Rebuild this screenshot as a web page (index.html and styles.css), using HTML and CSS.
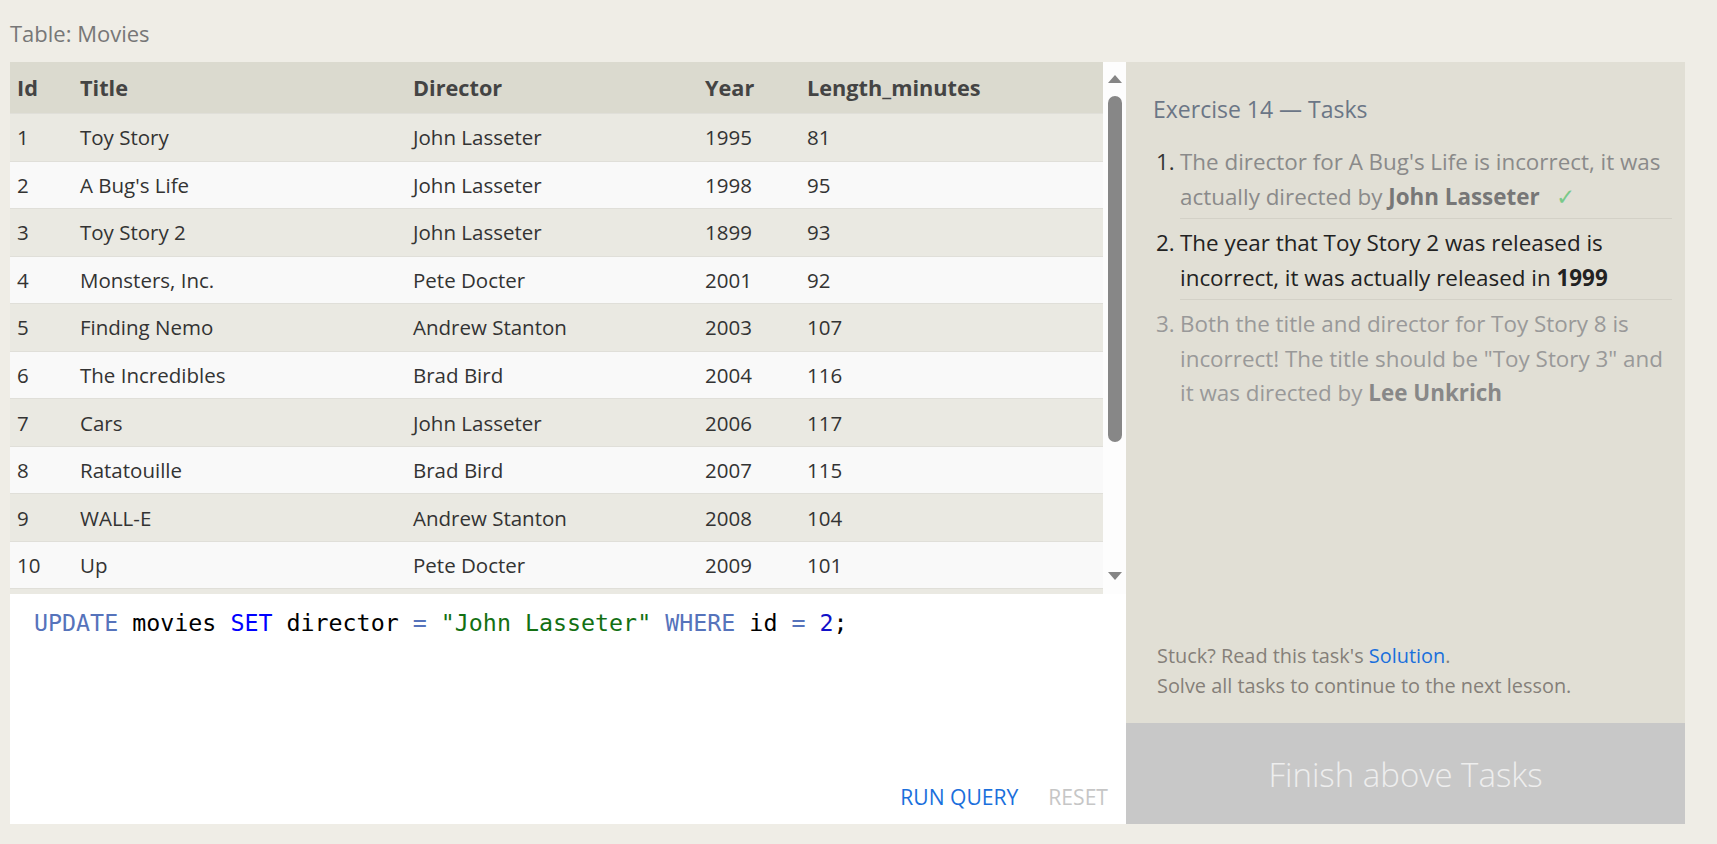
FILE: index.html
```html
<!DOCTYPE html>
<html lang="en">
<head>
<meta charset="utf-8">
<title>SQL Lesson</title>
<link rel="stylesheet" href="styles.css">
</head>
<body>
<div class="page">
  <div class="caption">Table: Movies</div>
  <div class="main">
    <div class="left">
      <div class="table-wrap">
        <div class="table">
          <div class="row head"><div>Id</div><div>Title</div><div>Director</div><div>Year</div><div>Length_minutes</div></div>
          <div class="row odd"><div>1</div><div>Toy Story</div><div>John Lasseter</div><div>1995</div><div>81</div></div>
          <div class="row even"><div>2</div><div>A Bug's Life</div><div>John Lasseter</div><div>1998</div><div>95</div></div>
          <div class="row odd"><div>3</div><div>Toy Story 2</div><div>John Lasseter</div><div>1899</div><div>93</div></div>
          <div class="row even"><div>4</div><div>Monsters, Inc.</div><div>Pete Docter</div><div>2001</div><div>92</div></div>
          <div class="row odd"><div>5</div><div>Finding Nemo</div><div>Andrew Stanton</div><div>2003</div><div>107</div></div>
          <div class="row even"><div>6</div><div>The Incredibles</div><div>Brad Bird</div><div>2004</div><div>116</div></div>
          <div class="row odd"><div>7</div><div>Cars</div><div>John Lasseter</div><div>2006</div><div>117</div></div>
          <div class="row even"><div>8</div><div>Ratatouille</div><div>Brad Bird</div><div>2007</div><div>115</div></div>
          <div class="row odd"><div>9</div><div>WALL-E</div><div>Andrew Stanton</div><div>2008</div><div>104</div></div>
          <div class="row even"><div>10</div><div>Up</div><div>Pete Docter</div><div>2009</div><div>101</div></div>
          <div class="row odd partial"></div>
        </div>
        <div class="scrollbar">
          <span class="arrow up"></span>
          <div class="track"><span class="thumb"></span></div>
          <span class="arrow down"></span>
        </div>
      </div>
      <div class="editor">
        <div class="code"><span class="kw">UPDATE</span> movies <span class="kw2">SET</span> director <span class="op">=</span> <span class="str">"John Lasseter"</span> <span class="kw">WHERE</span> id <span class="op">=</span> <span class="num">2</span>;</div>
        <div class="actions"><span class="run">RUN QUERY</span><span class="reset">RESET</span></div>
      </div>
    </div>
    <div class="panel">
      <div class="panel-body">
        <h2 class="ex-title">Exercise 14 — Tasks</h2>
        <ol class="tasks">
          <li class="task done"><span class="n">1.</span><span class="t">The director for A Bug's Life is incorrect, it was actually directed by <b>John Lasseter</b><span class="check">✓</span></span></li>
          <li class="task current"><span class="n">2.</span><span class="t">The year that Toy Story 2 was released is incorrect, it was actually released in <b>1999</b></span></li>
          <li class="task todo"><span class="n">3.</span><span class="t">Both the title and director for Toy Story 8 is incorrect! The title should be "Toy Story 3" and it was directed by <b>Lee Unkrich</b></span></li>
        </ol>
        <div class="help">
          <p>Stuck? Read this task's <a class="sol">Solution</a>.</p>
          <p>Solve all tasks to continue to the next lesson.</p>
        </div>
      </div>
      <div class="finish">Finish above Tasks</div>
    </div>
  </div>
</div>
</body>
</html>
```

FILE: styles.css
```css
html, body {
  margin: 0;
  padding: 0;
  background: #efede6;
  font-family: "Open Sans", "Noto Sans", sans-serif;
  color: #333;
}

.page {
  padding-left: 10px;
  width: 1675px;
}

.caption {
  height: 62px;
  box-sizing: border-box;
  padding-top: 19px;
  font-size: 22px;
  line-height: 28px;
  color: #777;
}

.main {
  display: flex;
  height: 762px;
}

.left {
  width: 1116px;
  display: flex;
  flex-direction: column;
}

.table-wrap {
  height: 532px;
  display: flex;
  overflow: hidden;
}

.table {
  width: 1093px;
  overflow: hidden;
  font-size: 20.5px;
}

.row {
  display: grid;
  grid-template-columns: 63px 333px 292px 102px 1fr;
  height: 47.56px;
  align-items: center;
  box-sizing: border-box;
  border-top: 1px solid #e0dfd9;
}

.row > div {
  padding-left: 7px;
  white-space: nowrap;
}

.row.head {
  height: 51px;
  border-top: 0;
  background: #dbdacf;
  font-weight: 700;
  font-size: 21.7px;
  color: #444;
}

.row.odd { background: #eae9e2; }
.row.even { background: #f9f9f9; }

.scrollbar {
  width: 23px;
  background: #fdfdfd;
  display: flex;
  flex-direction: column;
  align-items: center;
}

.arrow {
  width: 0;
  height: 0;
  border-left: 7.5px solid transparent;
  border-right: 7.5px solid transparent;
}

.arrow.up {
  margin-top: 13px;
  border-bottom: 8px solid #858585;
}

.arrow.down {
  margin-bottom: 14px;
  border-top: 8px solid #858585;
}

.track {
  flex: 1;
  width: 100%;
  padding-top: 13px;
  display: flex;
  justify-content: center;
}

.thumb {
  display: block;
  width: 14px;
  height: 346px;
  border-radius: 7px;
  background: #878787;
  margin-left: 1px;
}

.editor {
  flex: 1;
  background: #fff;
  display: flex;
  flex-direction: column;
  justify-content: space-between;
}

.code {
  font-family: "DejaVu Sans Mono", "Liberation Mono", monospace;
  font-size: 23.3px;
  line-height: 30px;
  padding: 14px 0 0 24px;
  color: #000;
  white-space: pre;
}

.kw { color: #5673bb; }
.kw2 { color: #0000ff; }
.op { color: #5673bb; }
.str { color: #137013; }
.num { color: #1111c8; }

.actions {
  display: flex;
  justify-content: flex-end;
  gap: 30px;
  padding: 0 18px 15px 0;
  font-size: 21.1px;
  line-height: 24px;
}

.run { color: #1a6fdc; }
.reset { color: #c6c6c6; }

.panel {
  width: 559px;
  background: #e1dfd5;
  display: flex;
  flex-direction: column;
}

.panel-body {
  flex: 1;
  padding: 33px 13px 0 27px;
  display: flex;
  flex-direction: column;
}

.ex-title {
  margin: 0;
  font-weight: 400;
  font-size: 23px;
  line-height: 28px;
  color: #6b7686;
}

.tasks {
  list-style: none;
  margin: 15px 0 0 0;
  padding: 0;
  font-size: 22.4px;
  line-height: 34.5px;
}

.task {
  display: flex;
}

.task .n {
  width: 27px;
  flex: none;
  text-align: left;
  padding-left: 3px;
  box-sizing: border-box;
  padding-top: 7px;
}

.task .t {
  flex: 1;
  padding: 7px 0 4px 0;
  border-bottom: 1px solid #d3d1c7;
}

.task.todo .t { border-bottom: 0; }

.done .n { color: #333; }
.done .t { color: #8a8a8a; }
.done b { color: #777; }
.check {
  color: #79c98a;
  margin-left: 16px;
  font-family: "DejaVu Sans", sans-serif;
  font-weight: 300;
  font-size: 23px;
}

.current .n, .current .t { color: #222; }
.current b { color: #222; }

.todo .n, .todo .t { color: #999; }
.todo b { color: #888; }

.help {
  margin-top: auto;
  padding-left: 4px;
  padding-bottom: 22px;
  font-size: 19.9px;
  line-height: 30px;
  color: #857f79;
}

.help p { margin: 0; }

.sol { color: #1a6fdc; }

.finish {
  height: 101px;
  background: #c8c8c8;
  color: #eeeeee;
  font-size: 33px;
  font-weight: 300;
  display: flex;
  align-items: center;
  justify-content: center;
  padding-top: 2px;
  box-sizing: border-box;
}
```
